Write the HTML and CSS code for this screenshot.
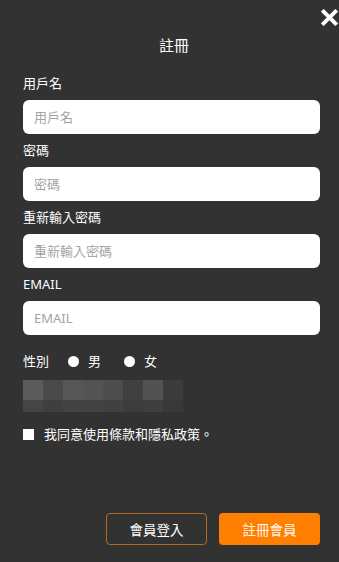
FILE: index.html
```html
<!DOCTYPE html>
<html lang="zh-Hant">
<head>
<meta charset="utf-8">
<title>註冊</title>
<link rel="stylesheet" href="styles.css">
</head>
<body>
<div class="modal">
  <button class="close" aria-label="close">
    <svg viewBox="0 0 16 16" width="17" height="17"><path d="M2.5 2.5 L13.5 13.5 M13.5 2.5 L2.5 13.5" stroke="#fff" stroke-width="3.6" stroke-linecap="square"/></svg>
  </button>
  <h1 class="title">註冊</h1>
  <div class="field">
    <label class="label">用戶名</label>
    <input class="input" type="text" placeholder="用戶名">
  </div>
  <div class="field">
    <label class="label">密碼</label>
    <input class="input" type="password" placeholder="密碼">
  </div>
  <div class="field">
    <label class="label">重新輸入密碼</label>
    <input class="input" type="password" placeholder="重新輸入密碼">
  </div>
  <div class="field">
    <label class="label">EMAIL</label>
    <input class="input" type="text" placeholder="EMAIL">
  </div>
  <div class="gender">
    <span class="gender-label">性別</span>
    <span class="radio"><span class="dot"></span>男</span>
    <span class="radio"><span class="dot"></span>女</span>
  </div>
  <div class="captcha">
    <span class="c1"></span><span class="c2"></span><span class="c3"></span><span class="c4"></span><span class="c5"></span><span class="c6"></span><span class="c7"></span><span class="c8"></span>
    <span class="d1"></span><span class="d2"></span><span class="d3"></span><span class="d4"></span><span class="d5"></span><span class="d6"></span><span class="d7"></span><span class="d8"></span>
  </div>
  <div class="agree">
    <span class="box"></span>
    <span>我同意使用條款和隱私政策。</span>
  </div>
  <div class="actions">
    <button class="btn btn-outline">會員登入</button>
    <button class="btn btn-primary">註冊會員</button>
  </div>
</div>
</body>
</html>
```
FILE: styles.css
```css
html, body {
  margin: 0;
  padding: 0;
  background: #323232;
  height: 100%;
}
body {
  font-family: "Noto Sans", "Noto Sans CJK TC", sans-serif;
  color: #fff;
}
.modal {
  position: relative;
  padding: 34px 19px 0 23px;
}
.close {
  position: absolute;
  top: 9px;
  right: 1px;
  width: 17px;
  height: 17px;
  padding: 0;
  border: 0;
  background: none;
  display: flex;
}
.title {
  margin: 0 0 17px;
  font-size: 15px;
  font-weight: 400;
  line-height: 22px;
  text-align: center;
  padding-left: 5px;
}
.field {
  margin-top: 6px;
}
.label {
  display: block;
  font-size: 13px;
  line-height: 20px;
  margin-bottom: 7px;
}
.input {
  display: block;
  box-sizing: border-box;
  width: 100%;
  height: 34px;
  border: 0;
  border-radius: 6px;
  background: #fff;
  padding: 0 11px;
  font-family: "Noto Sans", "Noto Sans CJK TC", sans-serif;
  font-size: 13px;
  color: #333;
  outline: none;
}
.input::placeholder {
  color: #a3a3a3;
}
.gender {
  margin-top: 16px;
  display: flex;
  align-items: center;
  font-size: 13px;
  line-height: 20px;
}
.gender-label {
  margin-right: 19px;
}
.radio {
  display: flex;
  align-items: center;
  margin-right: 23px;
}
.dot {
  width: 11px;
  height: 11px;
  border-radius: 50%;
  background: #fff;
  margin-right: 9px;
}
.captcha {
  margin-top: 9px;
  display: grid;
  grid-template-columns: repeat(8, 20px);
  grid-template-rows: 20px 12px;
  width: 160px;
  filter: blur(0.6px);
}
.c1 { background: #5b5b5b; }
.c2 { background: #4a4a4a; }
.c3 { background: #565656; }
.c4 { background: #535353; }
.c5 { background: #4d4d4d; }
.c6 { background: #404040; }
.c7 { background: #525252; }
.c8 { background: #3b3b3b; }
.d1 { background: #454545; }
.d2 { background: #3f3f3f; }
.d3 { background: #434343; }
.d4 { background: #424242; }
.d5 { background: #414141; }
.d6 { background: #3c3c3c; }
.d7 { background: #3f3f3f; }
.d8 { background: #383838; }
.agree {
  margin-top: 12px;
  display: flex;
  align-items: center;
  font-size: 13px;
  line-height: 20px;
}
.box {
  width: 11px;
  height: 11px;
  background: #fff;
  margin-right: 10px;
}
.actions {
  margin-top: 69px;
  display: flex;
  justify-content: flex-end;
  gap: 12px;
}
.btn {
  box-sizing: border-box;
  width: 101px;
  height: 32px;
  border-radius: 4px;
  font-family: "Noto Sans", "Noto Sans CJK TC", sans-serif;
  font-size: 13.5px;
  color: #fff;
  padding: 0;
}
.btn-outline {
  background: transparent;
  border: 1.5px solid #b8681f;
}
.btn-primary {
  background: #ff8000;
  border: 0;
  color: #fff6ec;
}
```
